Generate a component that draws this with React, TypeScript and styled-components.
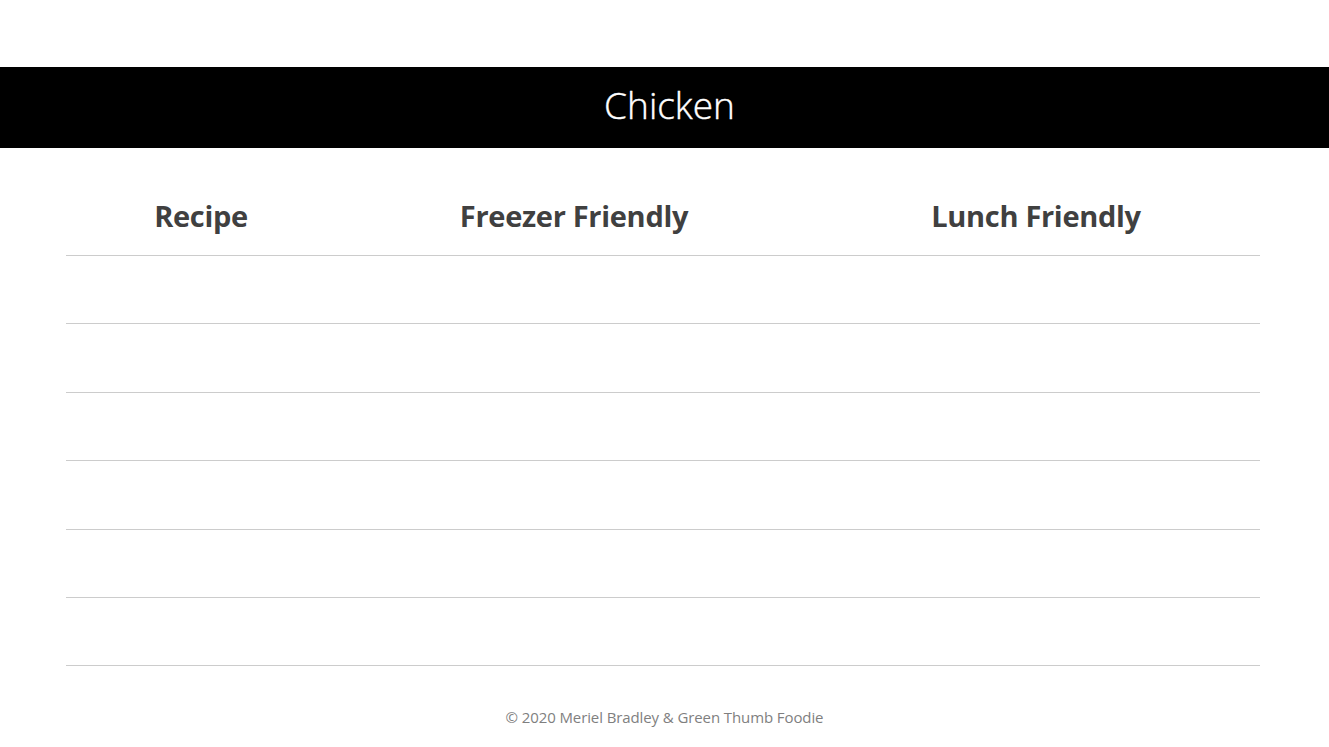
import React from "react";
import styled, { createGlobalStyle } from "styled-components";

const Global = createGlobalStyle`
  html, body { margin: 0; padding: 0; background: #fff; }
  body { font-family: "Open Sans", "Liberation Sans", sans-serif; }
`;

const Page = styled.div`
  width: 1329px;
  height: 747px;
  padding-top: 67px;
  box-sizing: border-box;
  display: flex;
  flex-direction: column;
`;

const Banner = styled.div`
  height: 81px;
  background: #000;
  color: #fff;
  display: flex;
  align-items: center;
  justify-content: center;
  font-size: 37px;
  font-weight: 300;
  -webkit-text-stroke: 0.4px #fff;
  padding: 0 0 7px 10px;
  box-sizing: border-box;
`;

const Table = styled.div`
  margin: 0 69px 0 66px;
  display: grid;
  grid-template-columns: 270px 476px 1fr;
`;

const HeadCell = styled.div`
  height: 108px;
  box-sizing: border-box;
  border-bottom: 1px solid #cccccc;
  display: flex;
  align-items: center;
  justify-content: center;
  padding-top: 27px;
  font-size: 29px;
  font-weight: 700;
  color: #404040;
  letter-spacing: -0.3px;
`;

const Cell = styled.div`
  height: 68.4px;
  box-sizing: border-box;
  border-bottom: 1px solid #cccccc;
`;

const Footer = styled.div`
  margin-top: 41px;
  text-align: center;
  font-size: 15px;
  color: #7f7f7f;
  letter-spacing: -0.1px;
`;

const headers = ["Recipe", "Freezer Friendly", "Lunch Friendly"];

export default function App() {
  const rows = Array.from({ length: 6 });
  return (
    <Page>
      <Global />
      <Banner>Chicken</Banner>
      <Table>
        {headers.map((h) => (
          <HeadCell key={h}>{h}</HeadCell>
        ))}
        {rows.map((_, r) =>
          headers.map((h) => <Cell key={`${r}-${h}`} />)
        )}
      </Table>
      <Footer>© 2020 Meriel Bradley &amp; Green Thumb Foodie</Footer>
    </Page>
  );
}
